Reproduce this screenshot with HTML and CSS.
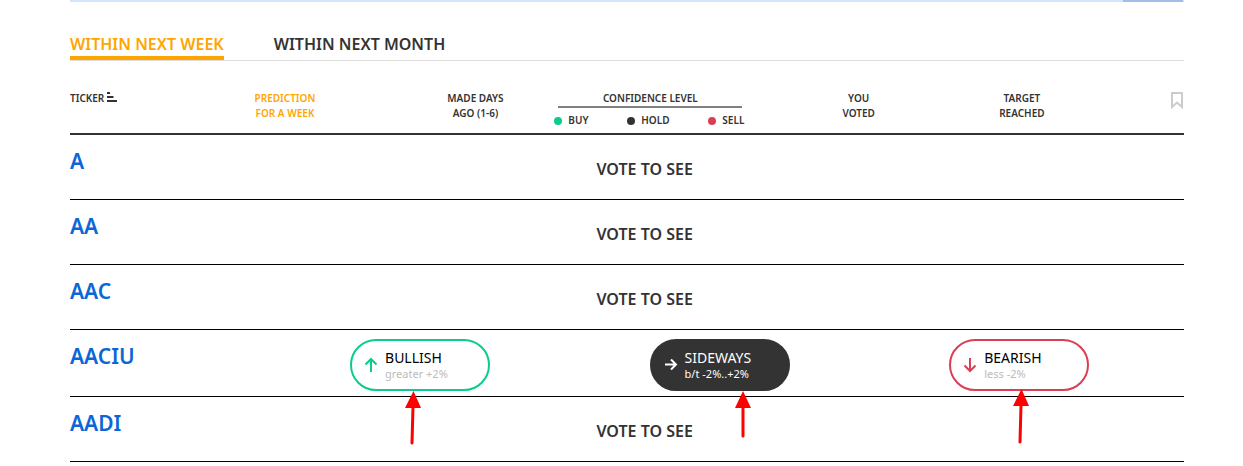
FILE: index.html
```html
<!DOCTYPE html>
<html lang="en">
<head>
  <meta charset="utf-8">
  <title>Predictions</title>
  <link rel="stylesheet" href="styles.css">
</head>
<body>
  <div class="container">
    <div class="scrollbar"><div class="scrollbar-thumb"></div></div>

    <div class="tabs">
      <button type="button" class="tab active">WITHIN NEXT WEEK</button>
      <button type="button" class="tab">WITHIN NEXT MONTH</button>
    </div>

    <table class="predictions">
      <colgroup>
        <col class="col-ticker">
        <col class="col-prediction">
        <col class="col-days">
        <col class="col-confidence">
        <col class="col-voted">
        <col class="col-target">
        <col class="col-mark">
      </colgroup>
      <thead>
        <tr>
          <th class="left">TICKER
            <svg class="sort-icon" width="10" height="10" viewBox="0 0 10 10"><path d="M0 1h3M0 5h6.500M0 9h10" stroke="#333" stroke-width="2"/></svg>
          </th>
          <th class="orange">PREDICTION<br>FOR A WEEK</th>
          <th>MADE DAYS<br>AGO (1-6)</th>
          <th>
            <div class="confidence">
              <div class="confidence-title">CONFIDENCE LEVEL</div>
              <div class="legend">
                <span class="buy">BUY</span>
                <span class="hold">HOLD</span>
                <span class="sell">SELL</span>
              </div>
            </div>
          </th>
          <th>YOU<br>VOTED</th>
          <th>TARGET<br>REACHED</th>
          <th class="right">
            <svg class="bookmark" width="14" height="18" viewBox="0 0 14 18"><path d="M2 2h10v14l-5-4.500L2 16z" fill="none" stroke="#ccc" stroke-width="2"/></svg>
          </th>
        </tr>
      </thead>
      <tbody>
        <tr>
          <td><a href="#" class="ticker">A</a></td>
          <td colspan="6" class="vote">VOTE TO SEE</td>
        </tr>
        <tr>
          <td><a href="#" class="ticker">AA</a></td>
          <td colspan="6" class="vote">VOTE TO SEE</td>
        </tr>
        <tr>
          <td><a href="#" class="ticker">AAC</a></td>
          <td colspan="6" class="vote">VOTE TO SEE</td>
        </tr>
        <tr>
          <td><a href="#" class="ticker">AACIU</a></td>
          <td colspan="6" class="choices-cell">
            <div class="choices">
              <div class="choice-wrap">
                <button type="button" class="choice bullish">
                  <svg width="14" height="16" viewBox="0 0 14 16"><path d="M7 15V2M1.500 7.500L7 2l5.500 5.500" fill="none" stroke="currentColor" stroke-width="2"/></svg>
                  <span class="choice-text">BULLISH<small>greater +2%</small></span>
                </button>
                <svg class="pointer pointer-bullish" width="18" height="56" viewBox="0 0 18 56"><path d="M9 16L8 52" stroke="#f00" stroke-width="3" stroke-linecap="round"/><path d="M9.500 0L1 17h16z" fill="#f00"/></svg>
              </div>
              <div class="choice-wrap">
                <button type="button" class="choice sideways">
                  <svg width="14" height="16" viewBox="0 0 14 16"><path d="M1 7.500h11M7 2.500l5 5-5 5" fill="none" stroke="currentColor" stroke-width="2"/></svg>
                  <span class="choice-text">SIDEWAYS<small>b/t -2%..+2%</small></span>
                </button>
                <svg class="pointer pointer-sideways" width="18" height="56" viewBox="0 0 18 56"><path d="M9 16v29" stroke="#f00" stroke-width="3" stroke-linecap="round"/><path d="M9 0L1 17h16z" fill="#f00"/></svg>
              </div>
              <div class="choice-wrap">
                <button type="button" class="choice bearish">
                  <svg width="14" height="16" viewBox="0 0 14 16"><path d="M7 1v13M1.500 8.500L7 14l5.500-5.500" fill="none" stroke="currentColor" stroke-width="2"/></svg>
                  <span class="choice-text">BEARISH<small>less -2%</small></span>
                </button>
                <svg class="pointer pointer-bearish" width="18" height="56" viewBox="0 0 18 56"><path d="M9 16L8 53" stroke="#f00" stroke-width="3" stroke-linecap="round"/><path d="M9.500 0L1 17h16z" fill="#f00"/></svg>
              </div>
            </div>
          </td>
        </tr>
        <tr>
          <td><a href="#" class="ticker">AADI</a></td>
          <td colspan="6" class="vote">VOTE TO SEE</td>
        </tr>
      </tbody>
    </table>
  </div>
</body>
</html>
```

FILE: styles.css
```css
* {
  box-sizing: border-box;
}

body {
  margin: 0;
  background: #fff;
  color: #333;
  font-family: "Noto Sans", sans-serif;
}

button {
  font-family: inherit;
  cursor: pointer;
}

.container {
  margin: 0 59px 0 70px;
}

.scrollbar {
  height: 2px;
  background: #d4e4fa;
  display: flex;
  justify-content: flex-end;
  padding-right: 1px;
}

.scrollbar-thumb {
  width: 60px;
  background: #9fbfe9;
}

/* tabs */
.tabs {
  display: flex;
  gap: 50px;
  margin-top: 32px;
  border-bottom: 1px solid #ddd;
}

.tab {
  padding: 0 0 2px;
  border: none;
  border-bottom: 4px solid transparent;
  background: none;
  color: #333;
  font-size: 16px;
  font-weight: 600;
  line-height: 20px;
}

.tab.active {
  color: #ffa500;
  border-bottom-color: #ffa500;
}

/* table */
.predictions {
  width: 100%;
  margin-top: 30px;
  table-layout: fixed;
  border-collapse: separate;
  border-spacing: 0;
}

.col-ticker { width: 9%; }
.col-prediction { width: 20.6%; }
.col-days { width: 13.6%; }
.col-confidence { width: 17.8%; }
.col-voted { width: 19.6%; }
.col-target { width: 9.7%; }
.col-mark { width: 9.7%; }

th {
  height: 44px;
  padding: 0;
  border-bottom: 2px solid #333;
  font-size: 10px;
  font-weight: 600;
  line-height: 15px;
  text-align: center;
  vertical-align: top;
}

th.left {
  text-align: left;
}

th.right {
  text-align: right;
}

th.orange {
  color: #ffa500;
}

.bookmark {
  display: block;
  margin-left: auto;
}

.confidence {
  width: 184px;
  margin: 0 auto;
}

.confidence-title {
  border-bottom: 2px solid #808080;
}

.legend {
  display: flex;
  justify-content: space-between;
  margin: 5px -2px 0 -4px;
}

.legend span {
  display: flex;
  align-items: center;
  gap: 6px;
}

.legend span:before {
  content: "";
  width: 8px;
  height: 8px;
  border-radius: 50%;
  background: #333;
}

.legend .buy:before {
  background: #0dcb8f;
}

.legend .sell:before {
  background: #d93f55;
}

td {
  height: 65px;
  padding: 11px 0 0;
  border-bottom: 1px solid #000;
  vertical-align: top;
}

.ticker {
  color: #0b67d6;
  font-size: 21px;
  font-weight: 600;
  line-height: 30px;
  text-decoration: none;
}

.vote {
  padding: 24px 65px 0 0;
  font-size: 16px;
  font-weight: 600;
  line-height: 20px;
  text-align: center;
}

.choices-cell {
  padding: 9px 15px 5px 100px;
}

.choices {
  display: flex;
  justify-content: space-around;
}

.choice-wrap {
  position: relative;
}

.choice {
  display: flex;
  align-items: center;
  gap: 7px;
  width: 140px;
  height: 52px;
  padding: 0 12px;
  border: 2px solid #0dcb8f;
  border-radius: 26px;
  background: #fff;
  color: #0dcb8f;
  text-align: left;
}

.choice-text {
  color: #000;
  font-size: 14px;
  font-weight: 400;
  line-height: 18px;
}

.choice-text small {
  display: block;
  color: #bbb;
  font-size: 11px;
  line-height: 14px;
}

.sideways {
  border-color: #333;
  background: #333;
  color: #fff;
}

.sideways .choice-text,
.sideways small {
  color: #fff;
}

.bearish {
  border-color: #d93f55;
  color: #d93f55;
}

.pointer {
  position: absolute;
  top: 52px;
}

.pointer-bullish { left: 54px; }
.pointer-sideways { left: 84px; }
.pointer-bearish { left: 63px; top: 50px; }
```
